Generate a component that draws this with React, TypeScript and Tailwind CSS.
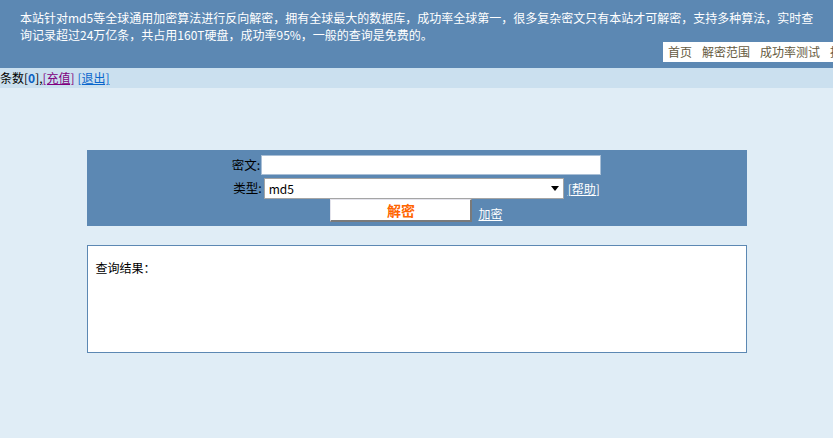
import React, { useState } from 'react';

const navItems = ['首页', '解密范围', '成功率测试', '批量解密'];

const App: React.FC = () => {
    const [cipher, setCipher] = useState('');
    const [algo, setAlgo] = useState('md5');

    return (
        <div className="min-h-[438px] bg-[#e0edf6] font-['Noto_Sans_CJK_SC',sans-serif] text-[12px] text-black">
            <div className="h-[68px] bg-[#5c88b3] flex flex-col">
                <p className="pl-[20px] pt-[9px] leading-[17px] text-white whitespace-nowrap">
                    本站针对md5等全球通用加密算法进行反向解密，拥有全球最大的数据库，成功率全球第一，很多复杂密文只有本站才可解密，支持多种算法，实时查
                    <br />
                    询记录超过24万亿条，共占用160T硬盘，成功率95%，一般的查询是免费的。
                </p>
                <div className="flex justify-start pl-[663px] -mt-px overflow-hidden">
                    <div className="h-[20px] w-[170px] shrink-0 bg-white flex items-center gap-[10px] pl-[5px] overflow-hidden whitespace-nowrap text-[#665a40] text-[12px]">
                        {navItems.map((item) => (
                            <span key={item} className="shrink-0">{item}</span>
                        ))}
                    </div>
                </div>
            </div>
            <div className="h-[20px] bg-[#cbe0ef] flex items-center whitespace-nowrap">
                条数[<b className="text-[#0a5fbf]">0</b>],
                <a href="#" className="text-[#800080] underline">[充值]</a>
                <span>&nbsp;</span>
                <a href="#" className="text-[#0a66cc] underline">[退出]</a>
            </div>

            <div className="w-[660px] mx-auto mt-[62px] h-[76px] bg-[#5c88b3] flex flex-col items-center pt-[5px]">
                <div className="flex items-center h-[20px]">
                    <span className="mr-[1px] text-[12.5px]">密文:</span>
                    <input
                        value={cipher}
                        onChange={(e) => setCipher(e.target.value)}
                        className="w-[340px] h-[20px] bg-white border border-[#a9bfd6] outline-none px-1"
                    />
                </div>
                <div className="flex items-center h-[21px] mt-[3px]">
                    <span className="mr-[2px] text-[12.5px]">类型:</span>
                    <div className="relative w-[300px] h-[21px] bg-white border border-[#a5a5a5] flex items-center">
                        <select
                            value={algo}
                            onChange={(e) => setAlgo(e.target.value)}
                            className="appearance-none w-full h-full bg-transparent pl-[4px] outline-none text-[12px]"
                        >
                            <option value="md5">md5</option>
                            <option value="sha1">sha1</option>
                        </select>
                        <span className="absolute right-[4px] top-[7px] w-0 h-0 border-l-[4px] border-r-[4px] border-t-[5px] border-l-transparent border-r-transparent border-t-black" />
                    </div>
                    <a href="#" className="ml-[4px] text-white underline">[帮助]</a>
                </div>
                <div className="flex items-end h-[23px]">
                    <button className="w-[142px] h-[23px] bg-white border-t border-l border-t-[#e4e4ec] border-l-[#e4e4ec] border-r-2 border-b-2 border-r-[#7a7a7a] border-b-[#7a7a7a] text-[#ff6600] font-bold text-[14px] leading-none">
                        解密
                    </button>
                    <a href="#" className="ml-[6px] text-white underline leading-[16px]">加密</a>
                </div>
            </div>

            <div className="w-[660px] mx-auto mt-[19px] h-[108px] bg-white border border-[#5c88b3] pl-[8px] pt-[13px]">
                查询结果：
            </div>
        </div>
    );
};

export default App;
